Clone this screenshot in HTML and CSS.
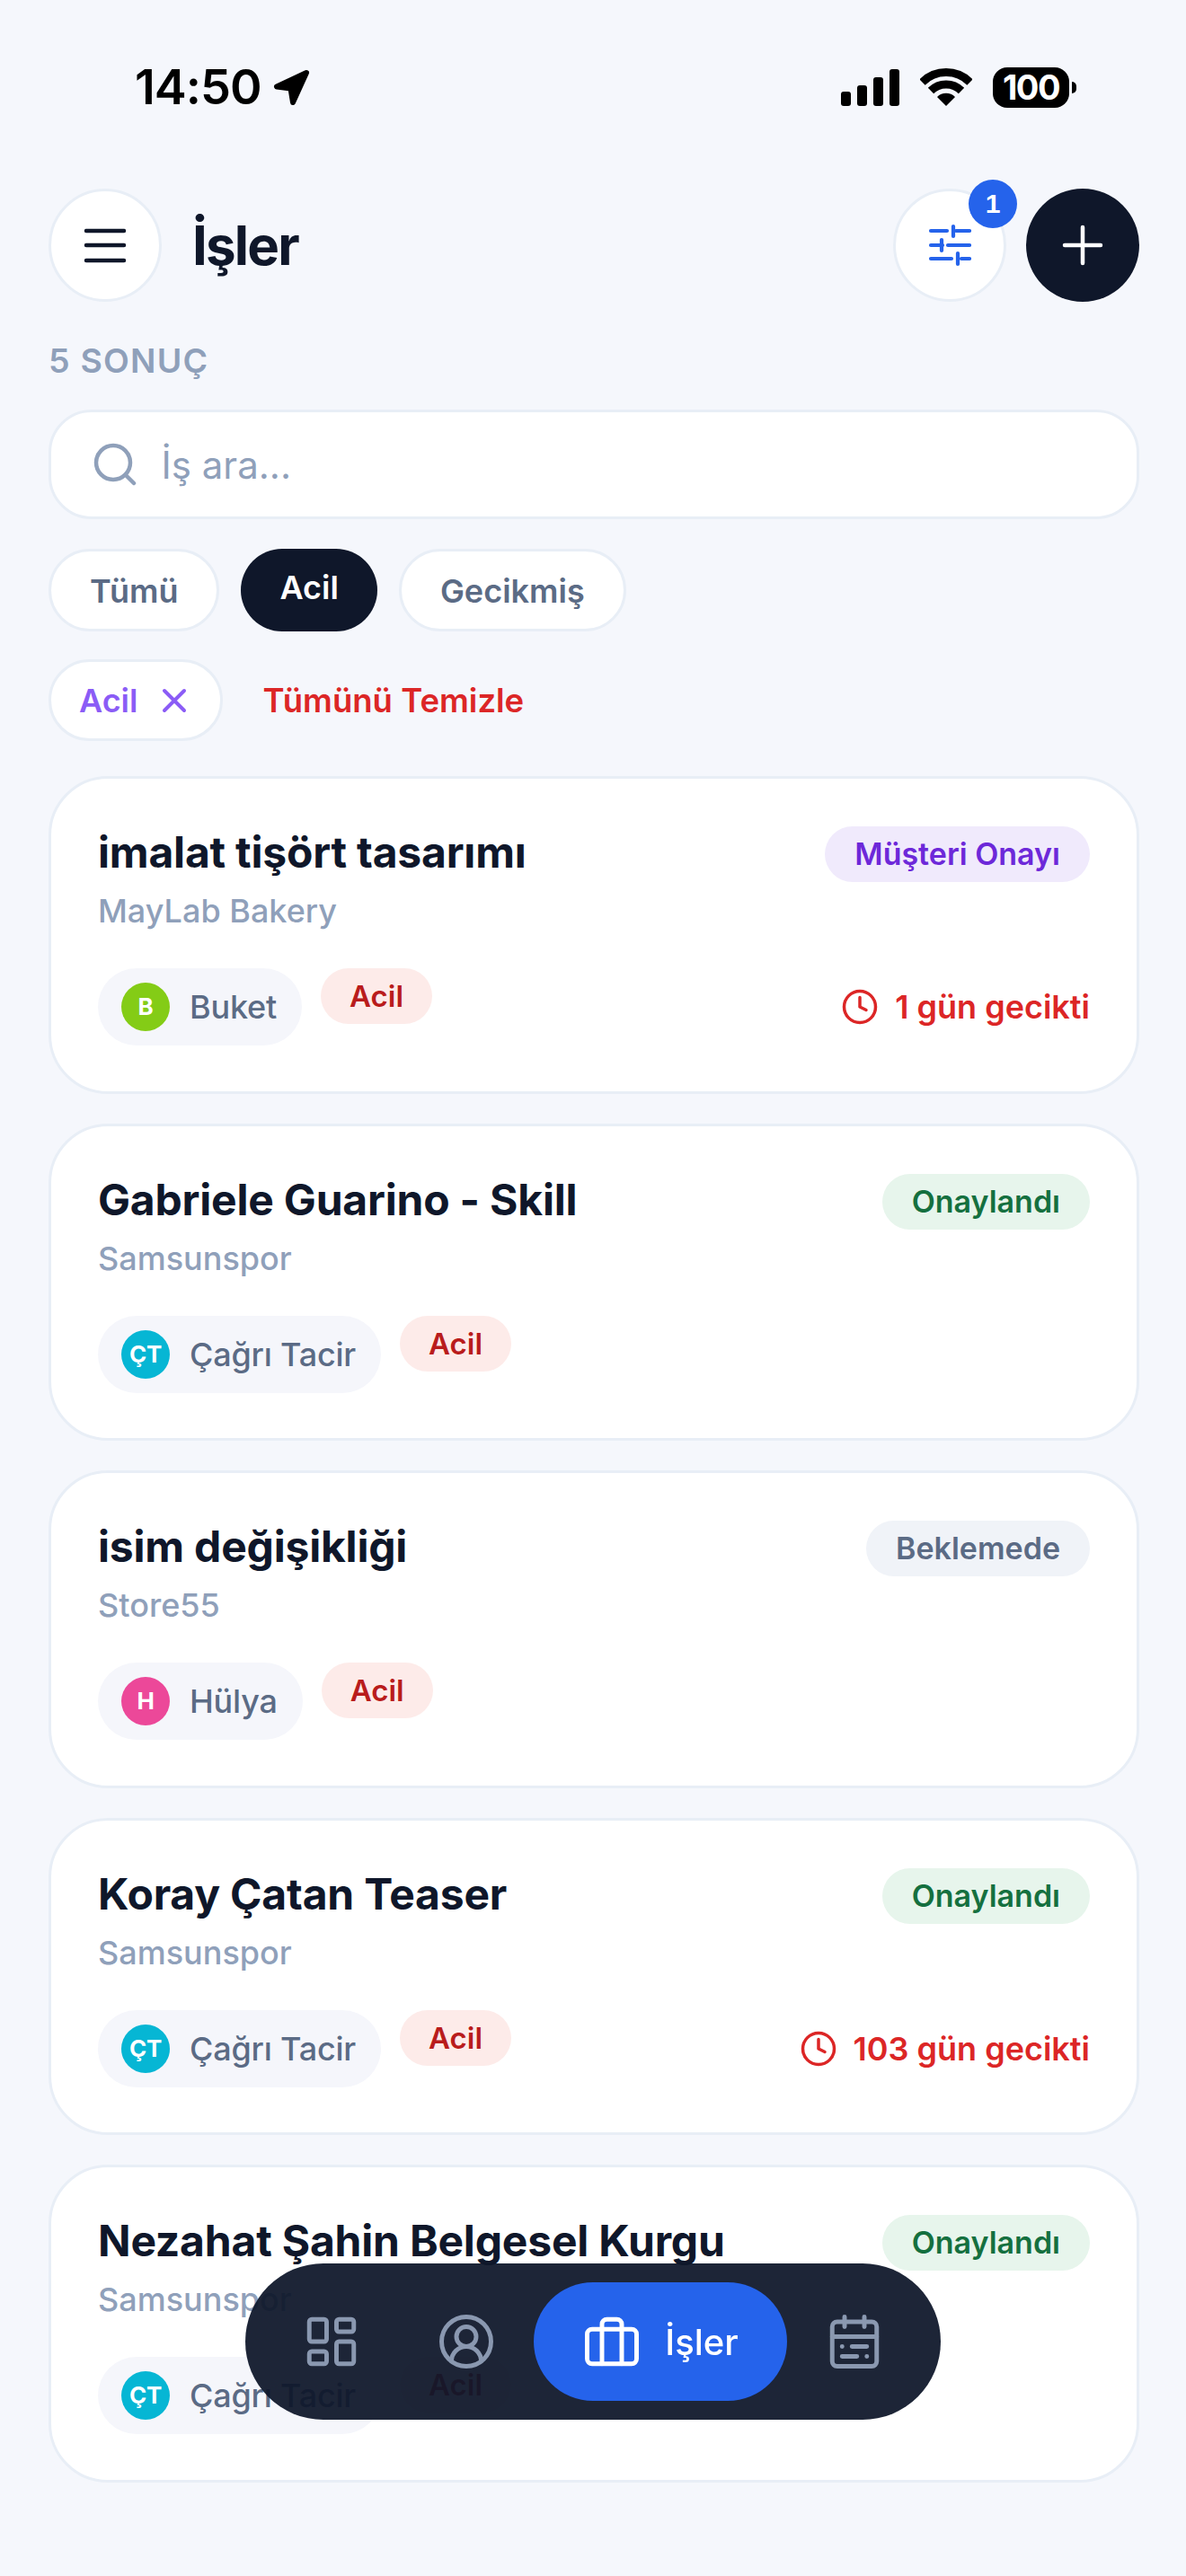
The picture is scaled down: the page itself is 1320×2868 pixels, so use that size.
FILE: index.html
```html
<!DOCTYPE html>
<html lang="tr">
<head>
    <meta charset="UTF-8">
    <meta name="viewport" content="width=device-width, initial-scale=1.0">
    <title>İşler</title>
    <link rel="stylesheet" href="styles.css">
</head>
<body>

<div class="status-bar">
  <div class="status-left">
    <span class="clock-time">14:50</span>
    <svg class="loc-arrow" viewBox="0 0 42 42"><path d="M37 5 L4 20.5 L19.5 22.5 L22 38 Z" fill="#000" stroke="#000" stroke-width="6" stroke-linejoin="round"/></svg>
  </div>
  <div class="status-right">
    <svg class="signal" viewBox="0 0 65 41" fill="#000">
      <rect x="0" y="25" width="11" height="16" rx="3"/>
      <rect x="18" y="18" width="11" height="23" rx="3"/>
      <rect x="36" y="9" width="11" height="32" rx="3"/>
      <rect x="54" y="0" width="11" height="41" rx="3"/>
    </svg>
    <svg class="wifi" viewBox="0 0 58 42" fill="none" stroke="#000" stroke-width="9">
      <path d="M2.5 15.5 A37.5 37.5 0 0 1 55.5 15.5"/>
      <path d="M12 25 A24 24 0 0 1 46 25"/>
      <path d="M29 42 L19 32 A14.1 14.1 0 0 1 39 32 Z" fill="#000" stroke="none"/>
    </svg>
    <div class="battery">100</div>
  </div>
</div>

<div class="top-bar">
  <div class="top-left">
    <button class="round-btn">
      <svg width="48" height="48" viewBox="0 0 48 48" stroke="#0f172a" stroke-width="4.5" stroke-linecap="round"><path d="M3 8h42M3 24h42M3 41h42"/></svg>
    </button>
    <h1 class="page-title">İşler</h1>
  </div>
  <div class="top-right">
    <button class="round-btn filter-btn">
      <svg width="48" height="48" viewBox="0 0 48 48" stroke="#2563eb" stroke-width="4.2" stroke-linecap="round"><path d="M3 8h18M28 3v11M31 8h15M3 24h13M15 18v12M22 24h24M3 39h23M33 33v12M37 39h9"/></svg>
      <span class="filter-count">1</span>
    </button>
    <button class="round-btn add-btn">
      <svg width="48" height="48" viewBox="0 0 48 48" stroke="#fff" stroke-width="4.5" stroke-linecap="round"><path d="M4 24h40M24 4v40"/></svg>
    </button>
  </div>
</div>

<div class="content">
  <div class="result-count">5 SONUÇ</div>

  <div class="search-box">
    <svg width="48" height="48" viewBox="0 0 48 48" fill="none" stroke="#8fa0ba" stroke-width="4.5" stroke-linecap="round"><circle cx="22" cy="22" r="19"/><path d="M36 36l9 9"/></svg>
    <span class="search-text">İş ara...</span>
  </div>

  <div class="chips">
    <div class="chip">Tümü</div>
    <div class="chip chip-active">Acil</div>
    <div class="chip">Gecikmiş</div>
  </div>

  <div class="active-filters">
    <div class="filter-tag">Acil
      <svg width="30" height="30" viewBox="0 0 30 30" stroke="#8b5cf6" stroke-width="4" stroke-linecap="round"><path d="M4 4l22 22M26 4L4 26"/></svg>
    </div>
    <span class="clear-all">Tümünü Temizle</span>
  </div>

  <div class="job-list">

    <div class="job-card">
      <div class="job-head">
        <div class="job-title">imalat tişört tasarımı</div>
        <span class="status status-purple">Müşteri Onayı</span>
      </div>
      <div class="job-client">MayLab Bakery</div>
      <div class="job-meta">
        <div class="owner"><span class="avatar av-green">B</span>Buket</div>
        <span class="urgent">Acil</span>
        <div class="late">
          <svg width="42" height="42" viewBox="0 0 24 24" fill="none" stroke="#dc2626" stroke-width="2" stroke-linecap="round" stroke-linejoin="round"><circle cx="12" cy="12" r="10"/><path d="M12 6v6l4 2"/></svg>
          1 gün gecikti
        </div>
      </div>
    </div>

    <div class="job-card">
      <div class="job-head">
        <div class="job-title">Gabriele Guarino - Skill</div>
        <span class="status status-green">Onaylandı</span>
      </div>
      <div class="job-client">Samsunspor</div>
      <div class="job-meta">
        <div class="owner"><span class="avatar av-cyan">ÇT</span>Çağrı Tacir</div>
        <span class="urgent">Acil</span>
      </div>
    </div>

    <div class="job-card">
      <div class="job-head">
        <div class="job-title">isim değişikliği</div>
        <span class="status status-gray">Beklemede</span>
      </div>
      <div class="job-client">Store55</div>
      <div class="job-meta">
        <div class="owner"><span class="avatar av-pink">H</span>Hülya</div>
        <span class="urgent">Acil</span>
      </div>
    </div>

    <div class="job-card">
      <div class="job-head">
        <div class="job-title">Koray Çatan Teaser</div>
        <span class="status status-green">Onaylandı</span>
      </div>
      <div class="job-client">Samsunspor</div>
      <div class="job-meta">
        <div class="owner"><span class="avatar av-cyan">ÇT</span>Çağrı Tacir</div>
        <span class="urgent">Acil</span>
        <div class="late">
          <svg width="42" height="42" viewBox="0 0 24 24" fill="none" stroke="#dc2626" stroke-width="2" stroke-linecap="round" stroke-linejoin="round"><circle cx="12" cy="12" r="10"/><path d="M12 6v6l4 2"/></svg>
          103 gün gecikti
        </div>
      </div>
    </div>

    <div class="job-card">
      <div class="job-head">
        <div class="job-title">Nezahat Şahin Belgesel Kurgu</div>
        <span class="status status-green">Onaylandı</span>
      </div>
      <div class="job-client">Samsunspor</div>
      <div class="job-meta">
        <div class="owner"><span class="avatar av-cyan">ÇT</span>Çağrı Tacir</div>
        <span class="urgent">Acil</span>
      </div>
    </div>

  </div>
</div>

<!-- alt menu -->
<nav class="bottom-nav">
  <div class="nav-item">
    <svg class="nav-icon" viewBox="0 0 24 24"><rect x="3" y="3" width="7" height="9" rx="1"/><rect x="14" y="3" width="7" height="5" rx="1"/><rect x="14" y="12" width="7" height="9" rx="1"/><rect x="3" y="16" width="7" height="5" rx="1"/></svg>
  </div>
  <div class="nav-item">
    <svg class="nav-icon" viewBox="0 0 24 24"><circle cx="12" cy="12" r="10"/><circle cx="12" cy="10" r="4"/><path d="M18 20a6 6 0 0 0-12 0"/></svg>
  </div>
  <div class="nav-item nav-active">
    <svg class="nav-icon" viewBox="0 0 24 24"><rect x="2" y="7" width="20" height="14" rx="2"/><path d="M16 21V5a2 2 0 0 0-2-2h-4a2 2 0 0 0-2 2v16"/></svg>
    <span>İşler</span>
  </div>
  <div class="nav-item">
    <svg class="nav-icon" viewBox="0 0 24 24"><rect x="3" y="4" width="18" height="18" rx="2"/><path d="M16 2v4M8 2v4M3 10h18M17 14h-6M13 18H7M7 14h.01M17 18h.01"/></svg>
  </div>
</nav>

</body>
</html>
```

FILE: styles.css
```css
* {
  box-sizing: border-box;
}

body {
  margin: 0;
  min-height: 2868px;
  background: #f5f7fc;
  color: #0f172a;
  font-family: Inter, "Noto Sans", sans-serif;
}

/* status bar */
.status-bar {
  display: flex;
  justify-content: space-between;
  height: 210px;
  padding: 74px 130px 0 150px;
}

.status-left {
  display: flex;
  align-items: center;
  gap: 13px;
  height: 46px;
}

.clock-time {
  font-size: 54px;
  font-weight: 600;
  line-height: 46px;
  color: #000;
  letter-spacing: -1px;
}

.loc-arrow {
  width: 42px;
  height: 42px;
}

.status-right {
  display: flex;
  align-items: center;
  height: 46px;
}

.signal {
  width: 65px;
  height: 41px;
  margin-right: 23px;
}

.wifi {
  width: 58px;
  height: 42px;
  margin-right: 23px;
}

.battery {
  position: relative;
  width: 85px;
  height: 45px;
  border-radius: 16px;
  background: #000;
  color: #fff;
  font-size: 38px;
  font-weight: 700;
  line-height: 45px;
  text-align: center;
  letter-spacing: -1.5px;
}

.battery::after {
  content: "";
  position: absolute;
  left: 88px;
  top: 16px;
  width: 5px;
  height: 13px;
  border-radius: 0 6px 6px 0;
  background: #000;
}

/* top bar */
.top-bar {
  display: flex;
  justify-content: space-between;
  align-items: center;
  padding: 0 52px 0 54px;
}

.top-left {
  display: flex;
  align-items: center;
  gap: 34px;
}

.top-right {
  display: flex;
  align-items: center;
  gap: 22px;
}

.round-btn {
  position: relative;
  display: flex;
  align-items: center;
  justify-content: center;
  width: 126px;
  height: 126px;
  padding: 0;
  border: 3px solid #e8eef6;
  border-radius: 50%;
  background: #fff;
}

.add-btn {
  border: none;
  background: #0f172a;
}

.filter-count {
  position: absolute;
  top: -13px;
  right: -15px;
  width: 54px;
  height: 54px;
  border-radius: 50%;
  background: #2563eb;
  color: #fff;
  font-size: 30px;
  font-weight: 700;
  line-height: 54px;
  text-align: center;
}

.page-title {
  margin: 0;
  font-size: 60px;
  font-weight: 700;
  line-height: 80px;
  letter-spacing: -1.8px;
}

/* filtreler */
.content {
  padding: 0 52px 0 54px;
}

.result-count {
  margin-top: 42px;
  font-size: 37.5px;
  font-weight: 600;
  line-height: 47px;
  letter-spacing: 1.2px;
  color: #8fa0ba;
}

.search-box {
  display: flex;
  align-items: center;
  gap: 28px;
  height: 122px;
  margin-top: 31px;
  padding: 0 46.5px;
  border: 3px solid #e8eef6;
  border-radius: 48px;
  background: #fff;
}

.search-text {
  font-size: 42px;
  color: #8fa0ba;
}

.chips {
  display: flex;
  gap: 24px;
  margin-top: 33px;
}

.chip {
  height: 92px;
  padding: 23.5px 43px 0;
  border: 3px solid #e8eef6;
  border-radius: 46px;
  background: #fff;
  color: #5b6b85;
  font-size: 36px;
  font-weight: 600;
  line-height: 40px;
}

.chip-active {
  padding: 23px 43px 0;
  border: none;
  background: #0f172a;
  color: #fff;
}

.active-filters {
  display: flex;
  align-items: center;
  gap: 44px;
  margin-top: 31px;
}

.filter-tag {
  display: flex;
  align-items: center;
  gap: 26px;
  height: 91px;
  padding: 0 36px 0 31px;
  border: 3px solid #e8eef6;
  border-radius: 46px;
  background: #fff;
  color: #8b5cf6;
  font-size: 36px;
  font-weight: 600;
}

.clear-all {
  color: #dc2626;
  font-size: 36.5px;
  font-weight: 600;
}

/* is kartlari */
.job-list {
  display: flex;
  flex-direction: column;
  gap: 33px;
  margin-top: 39px;
}

.job-card {
  padding: 53px 52px 50.5px;
  border: 3px solid #e8eef6;
  border-radius: 66px;
  background: #fff;
}

.job-head {
  display: flex;
  justify-content: space-between;
  align-items: flex-start;
  height: 62px;
}

.job-title {
  font-size: 48px;
  font-weight: 700;
  line-height: 58px;
  letter-spacing: -0.2px;
}

.status {
  padding: 0 33px;
  border-radius: 31px;
  font-size: 34px;
  font-weight: 600;
  line-height: 62px;
}

.status-purple {
  background: #f0eafc;
  color: #6d28d9;
}

.status-green {
  background: #e7f5ec;
  color: #15703f;
}

.status-gray {
  background: #f0f3f8;
  color: #5b6b85;
}

.job-client {
  margin-top: 8px;
  font-size: 36px;
  font-weight: 500;
  line-height: 48px;
  color: #8fa0ba;
}

.job-meta {
  display: flex;
  align-items: flex-start;
  gap: 21px;
  margin-top: 40px;
}

.owner {
  display: flex;
  align-items: center;
  gap: 22px;
  height: 86px;
  padding: 0 28px 0 26px;
  border-radius: 43px;
  background: #f5f6fb;
  color: #5b6b85;
  font-size: 36px;
  font-weight: 500;
  letter-spacing: -0.2px;
}

.avatar {
  width: 54px;
  height: 54px;
  border-radius: 50%;
  color: #fff;
  font-size: 26px;
  font-weight: 700;
  line-height: 54px;
  text-align: center;
}

.av-green {
  background: #84cc16;
}

.av-cyan {
  background: #06b6d4;
}

.av-pink {
  background: #ec4899;
}

.urgent {
  padding: 0 32px;
  border-radius: 31px;
  background: #fdebe9;
  color: #b91c1c;
  font-size: 33px;
  font-weight: 600;
  line-height: 62px;
}

.late {
  display: flex;
  align-items: center;
  gap: 18px;
  height: 86px;
  margin-left: auto;
  color: #dc2626;
  font-size: 36px;
  font-weight: 600;
}

/* alt menu */
.bottom-nav {
  position: fixed;
  left: 273px;
  bottom: 174px;
  display: flex;
  align-items: center;
  width: 774px;
  height: 174px;
  padding: 0 21px;
  border-radius: 87px;
  background: rgba(15, 23, 42, 0.94);
}

.nav-item {
  display: flex;
  align-items: center;
  justify-content: center;
  width: 150px;
  height: 132px;
}

.nav-icon {
  width: 66px;
  height: 66px;
  fill: none;
  stroke: #8a98b0;
  stroke-width: 1.8;
  stroke-linecap: round;
  stroke-linejoin: round;
}

.nav-active {
  gap: 26px;
  width: 282px;
  border-radius: 66px;
  background: #2563eb;
  color: #fff;
  font-size: 40px;
  font-weight: 500;
}

.nav-active .nav-icon {
  stroke: #fff;
}
```
